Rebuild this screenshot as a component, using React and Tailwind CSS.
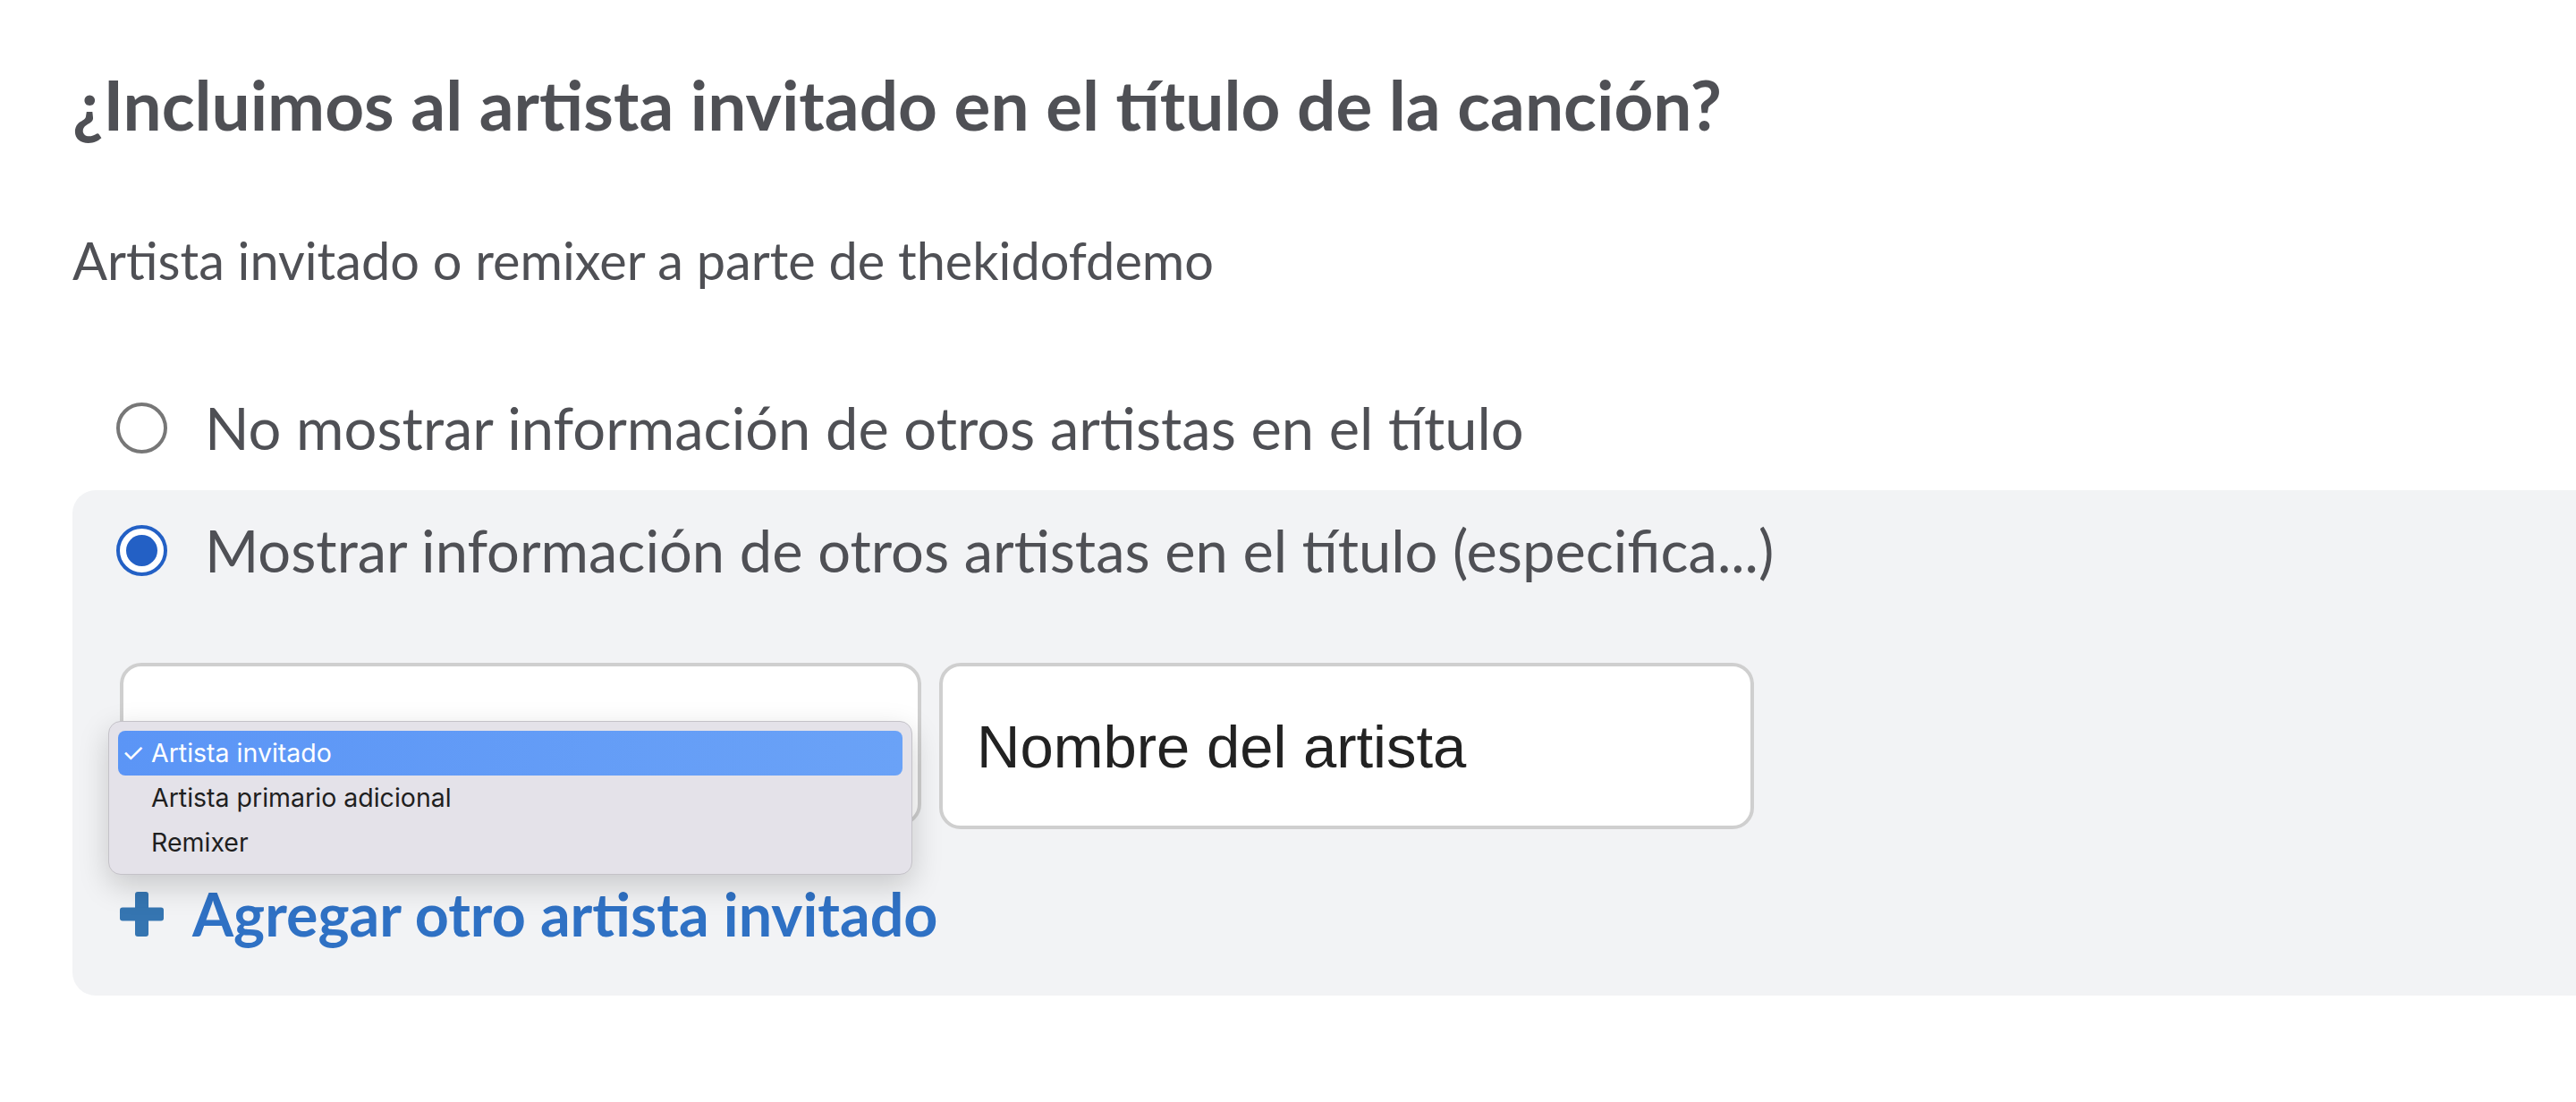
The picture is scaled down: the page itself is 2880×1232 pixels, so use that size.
import { useState } from 'react';

const roles = ['Artista invitado', 'Artista primario adicional', 'Remixer'];

function Radio({ checked }) {
  if (checked) {
    return (
      <span className="flex h-[57px] w-[57px] shrink-0 items-center justify-center rounded-full border-[4px] border-[#2360c5] bg-white">
        <span className="h-[35px] w-[35px] rounded-full bg-[#2360c5]" />
      </span>
    );
  }
  return <span className="h-[57px] w-[57px] shrink-0 rounded-full border-[4px] border-[#777777] bg-white" />;
}

function RoleMenu({ selected }) {
  return (
    <div className="absolute left-[-17px] top-[61px] z-10 w-[899px] rounded-[14px] border border-[#c4c2c8] bg-[#e4e2e9] p-[10px] shadow-[0_12px_34px_rgba(0,0,0,0.18)] font-['Inter',sans-serif] text-[28.5px] text-[#1f1f1f]">
      {roles.map((r) => (
        <div
          key={r}
          className={
            r === selected
              ? 'relative flex h-[50px] items-center rounded-[8px] bg-gradient-to-r from-[#5b95f6] to-[#6aa2f7] pl-[37px] leading-[50px] text-white'
              : 'relative flex h-[50px] items-center pl-[37px] leading-[50px]'
          }
        >
          {r === selected && <span className="absolute left-[4px] text-[29px]">✓</span>}
          {r}
        </div>
      ))}
    </div>
  );
}

export default function App() {
  const [choice] = useState('show');
  const [role] = useState(roles[0]);

  return (
    <div className="min-h-screen bg-white font-['Lato',sans-serif] text-[#4f5055]">
      <div className="pl-[81px] pt-[71px]">
        <h2 className="text-[76.5px] font-bold leading-[1.2]">¿Incluimos al artista invitado en el título de la canción?</h2>
        <p className="mt-[93px] text-[57.7px] leading-[1.2]">Artista invitado o remixer a parte de thekidofdemo</p>

        <div className="mt-[89px]">
          <label className="flex items-center gap-[42px] pl-[49px] pt-[25px] pb-[31px]">
            <Radio checked={choice === 'hide'} />
            <span className="text-[65px] leading-[1.2]">No mostrar información de otros artistas en el título</span>
          </label>

          <div className="rounded-l-[26px] bg-[#f2f3f5] pt-[28px] pb-[51px]">
            <label className="flex items-center gap-[42px] pl-[49px]">
              <Radio checked={choice === 'show'} />
              <span className="text-[65px] leading-[1.2]">Mostrar información de otros artistas en el título (especifica...)</span>
            </label>

            <div className="pl-[53px]">
              <div className="mt-[87px] flex items-start gap-[20px]">
                <div className="relative h-[182px] w-[896px] rounded-[24px] border-[4px] border-[#cfcfcf] bg-white">
                  <RoleMenu selected={role} />
                </div>
                <input
                  readOnly
                  value="Nombre del artista"
                  className="h-[186px] w-[911px] rounded-[24px] border-[4px] border-[#cfcfcf] bg-white pl-[38px] font-['Liberation_Sans',Arial,sans-serif] text-[67px] text-[#222222] outline-none"
                />
              </div>

              <button className="mt-[55px] flex items-center gap-[32px] text-[66.4px] font-bold leading-[1.2] text-[#2f71c4]">
                <svg width="49" height="50" viewBox="0 0 49 50" className="shrink-0">
                  <rect x="17" y="0" width="15" height="50" rx="3" fill="#3575b1" />
                  <rect x="0" y="17.5" width="49" height="15" rx="3" fill="#3575b1" />
                </svg>
                Agregar otro artista invitado
              </button>
            </div>
          </div>
        </div>
      </div>
    </div>
  );
}
